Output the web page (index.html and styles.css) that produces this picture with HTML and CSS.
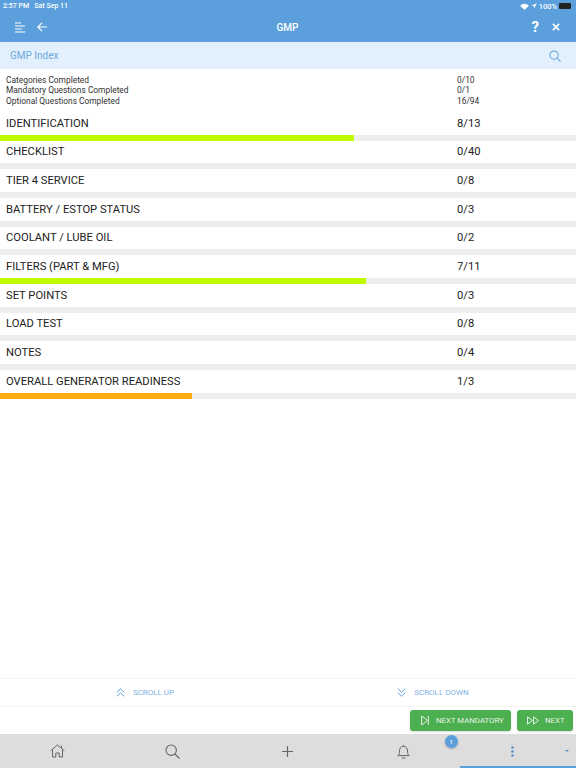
FILE: index.html
```html
<!DOCTYPE html>
<html lang="en">
<head>
  <meta charset="UTF-8" />
  <meta name="viewport" content="width=device-width, initial-scale=1.0" />
  <title>GMP Index</title>
  <link rel="stylesheet" href="styles.css">
</head>
<body>
  <div class="page">
    <header class="header">
      <div class="status">
        <span>2:57 PM&nbsp;&nbsp; Sat Sep 11</span>
        <span class="status-right">
          <svg width="9" height="7" viewBox="0 0 10 8"><path d="M5 8 0 3a7 7 0 0 1 10 0z" fill="#fff"/></svg>
          <svg width="6" height="6" viewBox="0 0 7 7"><path d="M7 0 0 3.400h3.400V7z" fill="#fff"/></svg>
          <span>100%</span>
          <span class="battery"></span>
        </span>
      </div>
      <div class="toolbar">
        <div class="toolbar-left">
          <svg width="10" height="11" viewBox="0 0 10 11" fill="none" stroke="#fff" stroke-width="1.200"><path d="M0 1h6M0 4h10M0 7h7M0 10h10"/></svg>
          <svg width="10" height="10" viewBox="0 0 10 10" fill="none" stroke="#fff" stroke-width="1.100"><path d="M10 5H.8M5 .8.800 5 5 9.200"/></svg>
        </div>
        <div class="toolbar-title">GMP</div>
        <div class="toolbar-right">
          <span class="help">?</span>
          <svg width="8" height="8" viewBox="0 0 9 9" fill="none" stroke="#fff" stroke-width="1.800"><path d="M1 1l7 7M8 1 1 8"/></svg>
        </div>
      </div>
    </header>

    <div class="subbar">
      <span>GMP Index</span>
      <svg width="12" height="12" viewBox="0 0 13 13" fill="none" stroke="#5b9fdc" stroke-width="1.100"><circle cx="5.500" cy="5.500" r="4.500"/><path d="M8.800 8.800 12.500 12.500"/></svg>
    </div>

    <main class="content">
      <div class="summary">
        <div class="summary-row"><span>Categories Completed</span><span>0/10</span></div>
        <div class="summary-row"><span>Mandatory Questions Completed</span><span>0/1</span></div>
        <div class="summary-row"><span>Optional Questions Completed</span><span>16/94</span></div>
      </div>

      <div class="list">
        <div class="item">
          <div class="item-text"><span>IDENTIFICATION</span><span>8/13</span></div>
          <div class="bar"><div class="fill green" style="width: 61.5%"></div></div>
        </div>
        <div class="item">
          <div class="item-text"><span>CHECKLIST</span><span>0/40</span></div>
          <div class="bar"></div>
        </div>
        <div class="item">
          <div class="item-text"><span>TIER 4 SERVICE</span><span>0/8</span></div>
          <div class="bar"></div>
        </div>
        <div class="item">
          <div class="item-text"><span>BATTERY / ESTOP STATUS</span><span>0/3</span></div>
          <div class="bar"></div>
        </div>
        <div class="item">
          <div class="item-text"><span>COOLANT / LUBE OIL</span><span>0/2</span></div>
          <div class="bar"></div>
        </div>
        <div class="item">
          <div class="item-text"><span>FILTERS (PART &amp; MFG)</span><span>7/11</span></div>
          <div class="bar"><div class="fill green" style="width: 63.6%"></div></div>
        </div>
        <div class="item">
          <div class="item-text"><span>SET POINTS</span><span>0/3</span></div>
          <div class="bar"></div>
        </div>
        <div class="item">
          <div class="item-text"><span>LOAD TEST</span><span>0/8</span></div>
          <div class="bar"></div>
        </div>
        <div class="item">
          <div class="item-text"><span>NOTES</span><span>0/4</span></div>
          <div class="bar"></div>
        </div>
        <div class="item">
          <div class="item-text"><span>OVERALL GENERATOR READINESS</span><span>1/3</span></div>
          <div class="bar"><div class="fill orange" style="width: 33.3%"></div></div>
        </div>
      </div>
    </main>

    <div class="scroll-row">
      <div class="scroll-btn">
        <svg width="9" height="9" viewBox="0 0 9 9" fill="none" stroke="#5b9fdc" stroke-width="1"><path d="M.8 4.400 4.500.8l3.700 3.600M.8 8.400l3.700-3.600 3.700 3.600"/></svg>
        <span>SCROLL UP</span>
      </div>
      <div class="scroll-btn">
        <svg width="9" height="9" viewBox="0 0 9 9" fill="none" stroke="#5b9fdc" stroke-width="1"><path d="M.8.6l3.700 3.600L8.200.6M.8 4.600l3.700 3.600 3.700-3.600"/></svg>
        <span>SCROLL DOWN</span>
      </div>
    </div>

    <div class="actions">
      <button class="action mandatory">
        <svg width="8" height="11" viewBox="0 0 8 11" fill="none" stroke="#e6f4e6" stroke-width="1"><path d="M.6 1v9M1 1.200 6.500 5.500 1 9.800M7.300 1v9"/></svg>
        <span>NEXT MANDATORY</span>
      </button>
      <button class="action next">
        <svg width="12" height="9" viewBox="0 0 12 9" fill="none" stroke="#e6f4e6" stroke-width="1"><path d="M.6.8v7.400L5.500 4.500zM6.500.8v7.400l4.900-3.700z"/></svg>
        <span>NEXT</span>
      </button>
    </div>

    <nav class="nav">
      <div class="nav-item">
        <svg width="15" height="14" viewBox="0 0 15 14" fill="none" stroke="#666" stroke-width="1"><path d="M.7 6.600 7.500 1l6.800 5.600M2.500 5.600V13h3.300V9h3.400v4h3.300V5.600M11.500 1.600v2.200"/></svg>
      </div>
      <div class="nav-item">
        <svg width="15" height="15" viewBox="0 0 15 15" fill="none" stroke="#666" stroke-width="1.100"><circle cx="6.200" cy="6.200" r="5.200"/><path d="M10 10l4.500 4.500"/></svg>
      </div>
      <div class="nav-item">
        <svg width="11" height="11" viewBox="0 0 11 11" fill="none" stroke="#666" stroke-width="1.200"><path d="M5.500 0v11M0 5.500h11"/></svg>
      </div>
      <div class="nav-item">
        <svg width="13" height="15" viewBox="0 0 13 15" fill="none" stroke="#666" stroke-width="1"><path d="M.8 11.600h11.400c-1.400-1-1.700-2.600-1.700-4.600 0-2.600-1.400-4.800-4-4.800S2.500 4.400 2.500 7c0 2-.3 3.600-1.700 4.600zM6.500 1v1.200M4.800 14h3.400"/></svg>
        <span class="badge">1</span>
      </div>
      <div class="nav-item nav-more">
        <svg width="3" height="11" viewBox="0 0 3 11" fill="#5b8fc4"><circle cx="1.500" cy="1.500" r="1.300"/><circle cx="1.500" cy="5.500" r="1.300"/><circle cx="1.500" cy="9.500" r="1.300"/></svg>
        <span class="caret"></span>
      </div>
      <div class="nav-indicator"></div>
    </nav>
  </div>
</body>
</html>
```

FILE: styles.css
```css
* {
  margin: 0;
  padding: 0;
  box-sizing: border-box;
  font-family: Roboto, 'Liberation Sans', sans-serif;
}

body, html {
  height: 100%;
  background: #fff;
  overflow: hidden;
}

.page {
  display: flex;
  flex-direction: column;
  height: 768px;
  width: 576px;
}

.header {
  height: 42px;
  background: #5b9fdc;
  color: #fff;
}

.status {
  display: flex;
  justify-content: space-between;
  align-items: center;
  height: 12px;
  padding: 0 5px 0 3px;
  font-size: 7px;
  font-weight: 500;
}

.status-right {
  display: flex;
  align-items: center;
  gap: 2px;
  font-size: 7.500px;
}

.battery {
  width: 12px;
  height: 6px;
  background: #222;
  border-radius: 1px;
}

.toolbar {
  display: grid;
  grid-template-columns: 1fr auto 1fr;
  align-items: center;
  height: 30px;
  padding: 0 16px 0 15px;
}

.toolbar-left {
  display: flex;
  align-items: center;
  gap: 12px;
}

.toolbar-right {
  display: flex;
  align-items: center;
  justify-content: flex-end;
  gap: 13px;
}

.toolbar-title {
  font-size: 10px;
  font-weight: 500;
}

.help {
  font-size: 15px;
  font-weight: 700;
  line-height: 1;
}

.subbar {
  display: flex;
  justify-content: space-between;
  align-items: center;
  height: 27px;
  padding: 0 15px 0 10px;
  background: #e1f0fc;
  color: #6fa8dd;
  font-size: 10px;
}

.content {
  flex: 1;
}

.summary {
  padding-top: 5.500px;
  height: 43px;
  font-size: 8.400px;
  line-height: 10.800px;
  color: #333;
}

.summary-row, .item-text {
  display: grid;
  grid-template-columns: 451px 1fr;
  padding-left: 6px;
}

.item {
  display: flex;
  flex-direction: column;
  height: 28.670px;
}

.item-text {
  flex: 1;
  align-items: center;
  font-size: 11.200px;
  color: #222;
}

.bar {
  height: 6px;
  background: #eeeeee;
}

.fill {
  height: 100%;
}

.green {
  background: #c0fb00;
}

.orange {
  background: #ffab0f;
}

.scroll-row {
  display: grid;
  grid-template-columns: 1fr 1fr;
  height: 29px;
  border-top: 1px solid #f3f3f3;
  border-bottom: 1px solid #f3f3f3;
}

.scroll-btn {
  display: flex;
  align-items: center;
  justify-content: center;
  gap: 8px;
  padding-left: 2px;
  color: #7fb3e3;
  font-size: 8px;
}

.actions {
  display: flex;
  justify-content: flex-end;
  gap: 6px;
  height: 27px;
  padding: 3px 3px 0 0;
}

.action {
  display: flex;
  align-items: center;
  height: 21px;
  border: none;
  border-radius: 3px;
  background: #4caf50;
  color: #e6f4e6;
  font-size: 7.800px;
  box-shadow: 0 1px 2px rgba(0, 0, 0, 0.15);
}

.mandatory {
  width: 101px;
  gap: 7px;
  padding-left: 11px;
}

.next {
  width: 56px;
  gap: 6px;
  padding-left: 10px;
}

.nav {
  position: relative;
  display: grid;
  grid-template-columns: repeat(5, 115.200px);
  height: 34px;
  background: #dddddd;
}

.nav-item {
  position: relative;
  display: flex;
  align-items: center;
  justify-content: center;
}

.nav-more {
  padding-right: 12px;
}

.badge {
  position: absolute;
  top: 1px;
  left: 99px;
  width: 13px;
  height: 13px;
  border-radius: 50%;
  background: #5b9fdc;
  color: #fff;
  font-size: 6px;
  line-height: 13px;
  text-align: center;
  box-shadow: 0 1px 2px rgba(0, 0, 0, 0.25);
}

.caret {
  position: absolute;
  right: 7px;
  top: 16px;
  border: 2px solid transparent;
  border-top: 2px solid #5b8fc4;
  border-bottom: none;
}

.nav-indicator {
  position: absolute;
  right: 0;
  bottom: 0;
  width: 116px;
  height: 2px;
  background: #5b9fdc;
}
```
